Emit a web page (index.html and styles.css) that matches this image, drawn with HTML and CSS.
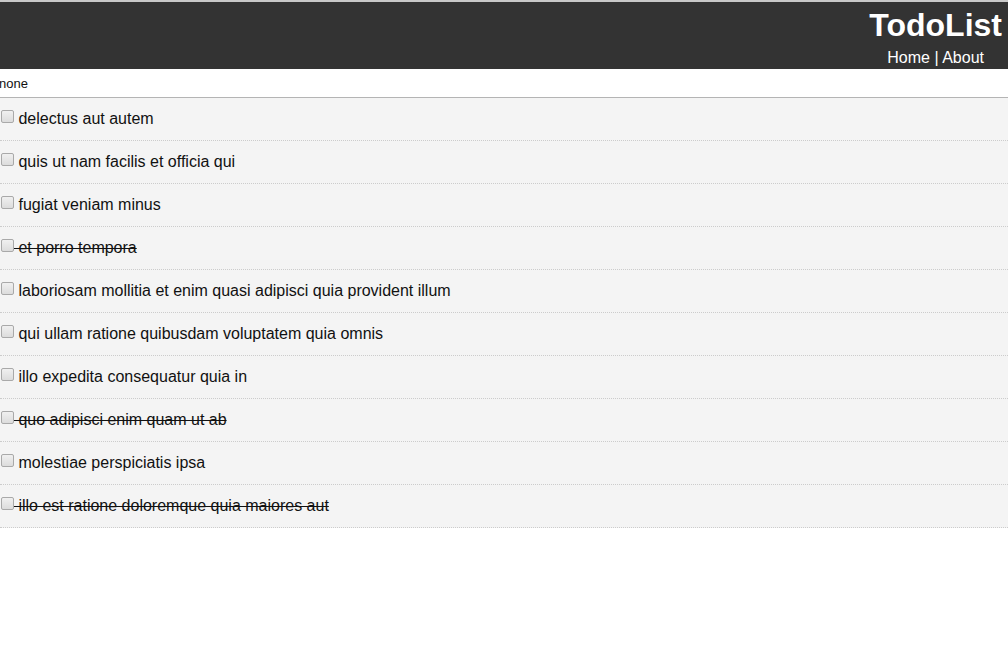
FILE: index.html
```html
<!DOCTYPE html>
<html>
<head>
<meta charset="utf-8">
<title>TodoList</title>
<link rel="stylesheet" href="styles.css">
</head>
<body>
<div class="topline"></div>
<header class="header">
  <div class="brand">
    <h1 class="title">TodoList</h1>
    <nav class="nav"><a href="#" class="link">Home</a> | <a href="#" class="link">About</a></nav>
  </div>
</header>
<div class="filter">none</div>
<div class="list">
  <p class="item"><input type="checkbox" class="check"> delectus aut autem</p>
  <p class="item"><input type="checkbox" class="check"> quis ut nam facilis et officia qui</p>
  <p class="item"><input type="checkbox" class="check"> fugiat veniam minus</p>
  <p class="item done"><input type="checkbox" class="check"> et porro tempora</p>
  <p class="item"><input type="checkbox" class="check"> laboriosam mollitia et enim quasi adipisci quia provident illum</p>
  <p class="item"><input type="checkbox" class="check"> qui ullam ratione quibusdam voluptatem quia omnis</p>
  <p class="item"><input type="checkbox" class="check"> illo expedita consequatur quia in</p>
  <p class="item done"><input type="checkbox" class="check"> quo adipisci enim quam ut ab</p>
  <p class="item"><input type="checkbox" class="check"> molestiae perspiciatis ipsa</p>
  <p class="item done"><input type="checkbox" class="check"> illo est ratione doloremque quia maiores aut</p>
</div>
</body>
</html>
```

FILE: styles.css
```css
html, body {
  margin: 0;
  padding: 0;
  background: #fff;
  font-family: "Liberation Sans", Arial, sans-serif;
  color: #111;
}

.topline {
  height: 2px;
  background: #c8c8c8;
}

.header {
  background: #333;
  color: #fff;
  height: 67px;
  display: flex;
  justify-content: flex-end;
}

.brand {
  margin-right: 6px;
  text-align: center;
  padding-top: 5px;
}

.title {
  margin: 0;
  font-size: 32px;
  line-height: 36px;
  font-weight: bold;
}

.nav {
  margin-top: 6px;
  font-size: 16px;
  line-height: 18px;
}

.link {
  color: #fff;
  text-decoration: none;
}

.filter {
  height: 28px;
  line-height: 30px;
  font-size: 13px;
  margin-left: -1px;
  border-bottom: 1px solid #b4b4b4;
  color: #111;
}

.list {
  margin: 0;
}

.item {
  margin: 0;
  background: #f4f4f4;
  border-bottom: 1px dotted #ccc;
  height: 42px;
  padding: 0;
  font-size: 16px;
  line-height: 42px;
  white-space: nowrap;
}

.item.done {
  text-decoration: line-through;
}

.check {
  appearance: none;
  -webkit-appearance: none;
  display: inline-block;
  width: 13px;
  height: 13px;
  box-sizing: border-box;
  margin: 0 0 1px 1px;
  border: 1px solid #a9a9a9;
  border-radius: 2px;
  background: linear-gradient(#f0f0f0, #dcdcdc);
  vertical-align: baseline;
}
```
